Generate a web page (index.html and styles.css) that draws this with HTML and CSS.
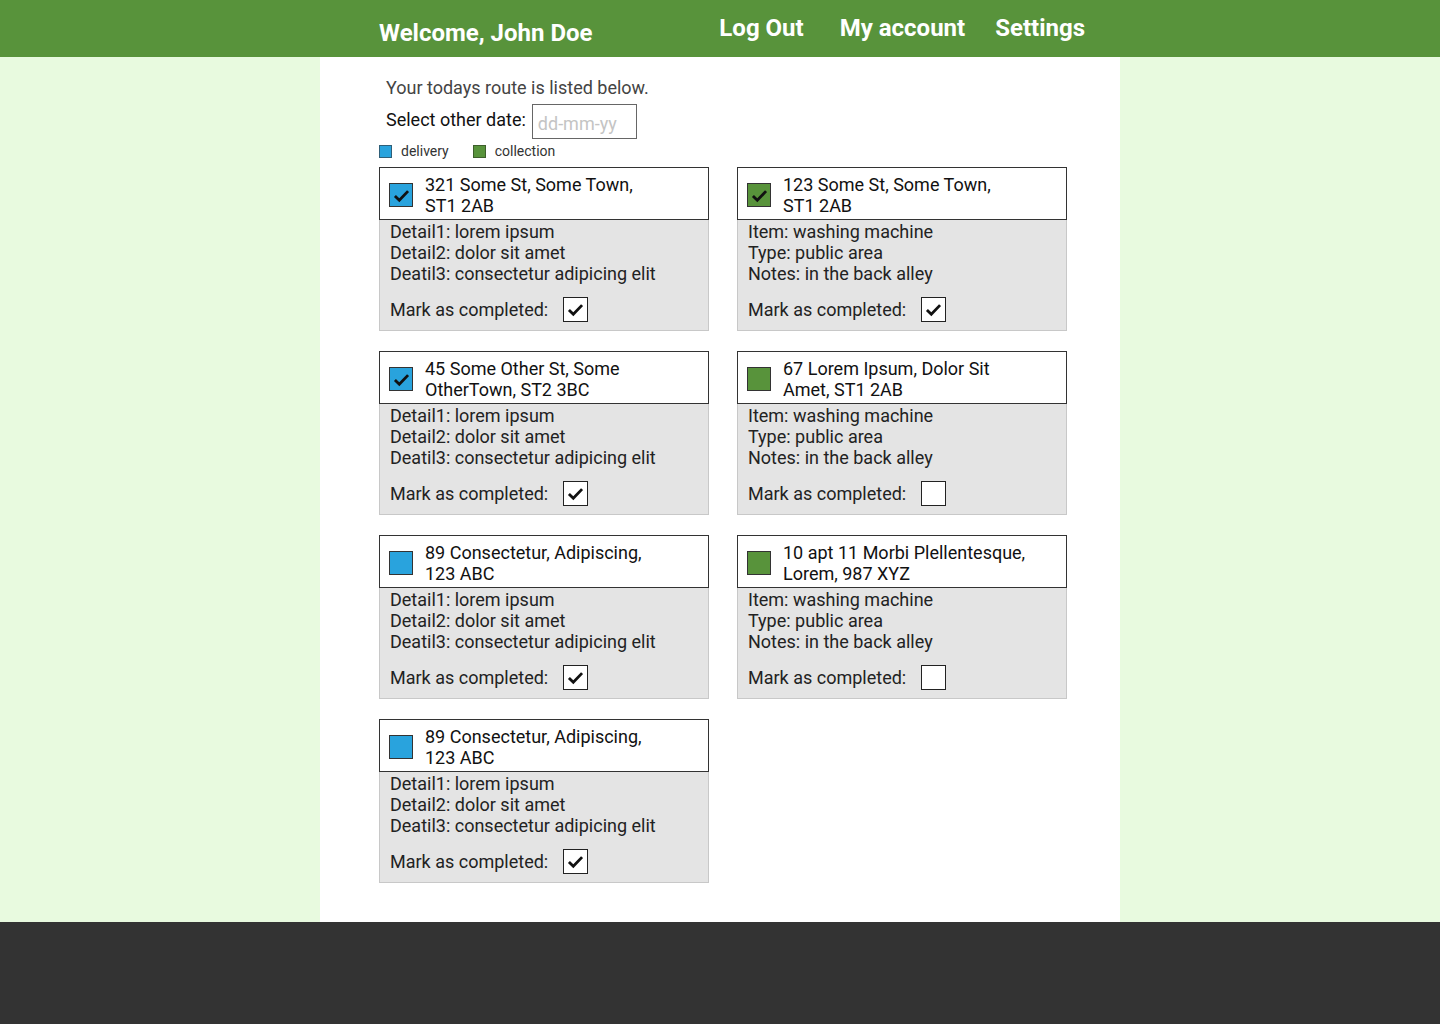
FILE: index.html
```html
<!DOCTYPE html>
<html lang="en">
<head>
<meta charset="utf-8">
<title>Route</title>
<link rel="stylesheet" href="styles.css">
</head>
<body>
<header class="topbar">
  <div class="topbar-inner">
    <div class="welcome">Welcome, John Doe</div>
    <nav class="nav">
      <a class="nav-link nav-logout" href="#">Log Out</a>
      <a class="nav-link nav-account" href="#">My account</a>
      <a class="nav-link" href="#">Settings</a>
    </nav>
  </div>
</header>
<div class="page">
  <main class="content">
    <p class="intro">Your todays route is listed below.</p>
    <div class="date-row">
      <label class="date-label" for="d">Select other date:</label>
      <input class="date-input" id="d" type="text" placeholder="dd-mm-yy">
    </div>
    <div class="legend">
      <span class="legend-item"><span class="swatch swatch-blue"></span>delivery</span>
      <span class="legend-item"><span class="swatch swatch-green"></span>collection</span>
    </div>
    <div class="cards">
      <div class="card">
        <div class="card-head">
          <span class="tag tag-blue"><svg viewBox="0 0 24 24"><path d="M4.5 12.5l5 5 10-10.5"/></svg></span>
          <span class="addr">321 Some St, Some Town,<br>ST1 2AB</span>
        </div>
        <div class="card-body">
          <div>Detail1: lorem ipsum</div>
          <div>Detail2: dolor sit amet</div>
          <div>Deatil3: consectetur adipicing elit</div>
          <div class="done-row">Mark as completed: <span class="box"><svg viewBox="0 0 24 24"><path d="M4.5 12.5l5 5 10-10.5"/></svg></span></div>
        </div>
      </div>
      <div class="card">
        <div class="card-head">
          <span class="tag tag-green"><svg viewBox="0 0 24 24"><path d="M4.5 12.5l5 5 10-10.5"/></svg></span>
          <span class="addr">123 Some St, Some Town,<br>ST1 2AB</span>
        </div>
        <div class="card-body">
          <div>Item: washing machine</div>
          <div>Type: public area</div>
          <div>Notes: in the back alley</div>
          <div class="done-row">Mark as completed: <span class="box"><svg viewBox="0 0 24 24"><path d="M4.5 12.5l5 5 10-10.5"/></svg></span></div>
        </div>
      </div>
      <div class="card">
        <div class="card-head">
          <span class="tag tag-blue"><svg viewBox="0 0 24 24"><path d="M4.5 12.5l5 5 10-10.5"/></svg></span>
          <span class="addr">45 Some Other St, Some<br>OtherTown, ST2 3BC</span>
        </div>
        <div class="card-body">
          <div>Detail1: lorem ipsum</div>
          <div>Detail2: dolor sit amet</div>
          <div>Deatil3: consectetur adipicing elit</div>
          <div class="done-row">Mark as completed: <span class="box"><svg viewBox="0 0 24 24"><path d="M4.5 12.5l5 5 10-10.5"/></svg></span></div>
        </div>
      </div>
      <div class="card">
        <div class="card-head">
          <span class="tag tag-green"></span>
          <span class="addr">67 Lorem Ipsum, Dolor Sit<br>Amet, ST1 2AB</span>
        </div>
        <div class="card-body">
          <div>Item: washing machine</div>
          <div>Type: public area</div>
          <div>Notes: in the back alley</div>
          <div class="done-row">Mark as completed: <span class="box"></span></div>
        </div>
      </div>
      <div class="card">
        <div class="card-head">
          <span class="tag tag-blue"></span>
          <span class="addr">89 Consectetur, Adipiscing,<br>123 ABC</span>
        </div>
        <div class="card-body">
          <div>Detail1: lorem ipsum</div>
          <div>Detail2: dolor sit amet</div>
          <div>Deatil3: consectetur adipicing elit</div>
          <div class="done-row">Mark as completed: <span class="box"><svg viewBox="0 0 24 24"><path d="M4.5 12.5l5 5 10-10.5"/></svg></span></div>
        </div>
      </div>
      <div class="card">
        <div class="card-head">
          <span class="tag tag-green"></span>
          <span class="addr">10 apt 11 Morbi Plellentesque,<br>Lorem, 987 XYZ</span>
        </div>
        <div class="card-body">
          <div>Item: washing machine</div>
          <div>Type: public area</div>
          <div>Notes: in the back alley</div>
          <div class="done-row">Mark as completed: <span class="box"></span></div>
        </div>
      </div>
      <div class="card">
        <div class="card-head">
          <span class="tag tag-blue"></span>
          <span class="addr">89 Consectetur, Adipiscing,<br>123 ABC</span>
        </div>
        <div class="card-body">
          <div>Detail1: lorem ipsum</div>
          <div>Detail2: dolor sit amet</div>
          <div>Deatil3: consectetur adipicing elit</div>
          <div class="done-row">Mark as completed: <span class="box"><svg viewBox="0 0 24 24"><path d="M4.5 12.5l5 5 10-10.5"/></svg></span></div>
        </div>
      </div>
    </div>
  </main>
</div>
<footer class="footer"></footer>
</body>
</html>
```
FILE: styles.css
```css
* { box-sizing: border-box; }
html, body { margin: 0; padding: 0; }
body {
  font-family: Roboto, "Liberation Sans", sans-serif;
  color: #222;
  background: #e8fadf;
  min-height: 1024px;
  display: flex;
  flex-direction: column;
}
.topbar {
  background: #58933b;
  height: 57px;
  color: #fff;
}
.topbar-inner {
  width: 800px;
  margin: 0 auto;
  height: 57px;
  display: flex;
  align-items: flex-start;
  padding: 0 35px 0 59px;
}
.welcome {
  font-weight: 700;
  font-size: 24px;
  line-height: 28px;
  padding-top: 19px;
}
.nav {
  margin-left: auto;
  display: flex;
  padding-top: 14px;
}
.nav-link {
  color: #fff;
  text-decoration: none;
  font-weight: 700;
  font-size: 24px;
  line-height: 28px;
}
.nav-logout { margin-right: 36px; }
.nav-account { margin-right: 30px; }

.page {
  flex: 1;
  display: flex;
  justify-content: center;
}
.content {
  width: 800px;
  background: #fff;
  padding: 20px 0 39px 59px;
}
.intro {
  margin: 0 0 6px 7px;
  font-size: 18px;
  line-height: 21px;
  color: #444;
}
.date-row {
  display: flex;
  align-items: center;
  margin-left: 7px;
  height: 35px;
}
.date-label {
  font-size: 18px;
  line-height: 21px;
  color: #111;
  margin-right: 6px;
  position: relative;
  top: -2px;
}
.date-input {
  width: 105px;
  height: 35px;
  border: 1px solid #666;
  font-family: Roboto, "Liberation Sans", sans-serif;
  font-size: 18px;
  padding: 3px 5px 0;
  color: #222;
  outline: none;
}
.date-input::placeholder { color: #c4c4c4; }
.legend {
  display: flex;
  align-items: center;
  margin-top: 3px;
  height: 18px;
  font-size: 14px;
  color: #333;
}
.legend-item {
  display: flex;
  align-items: center;
  margin-right: 24px;
}
.swatch {
  width: 13px;
  height: 13px;
  border: 1px solid #2f5f78;
  margin-right: 9px;
}
.swatch-blue { background: #29a3dd; }
.swatch-green { background: #58933b; border-color: #3d5f2b; }

.cards {
  margin-top: 7px;
  display: grid;
  grid-template-columns: 330px 330px;
  column-gap: 28px;
  row-gap: 20px;
}
.card {
  width: 330px;
  font-size: 18px;
  line-height: 21px;
}
.card-head {
  height: 53px;
  border: 1px solid #333;
  background: #fff;
  display: flex;
  align-items: center;
  padding: 2px 0 0 9px;
}
.tag {
  width: 24px;
  height: 24px;
  border: 1.5px solid #333;
  flex: none;
  margin-right: 12px;
  margin-top: 1px;
  display: flex;
  align-items: center;
  justify-content: center;
}
.tag-blue { background: #29a3dd; }
.tag-green { background: #58933b; }
.tag svg, .box svg {
  width: 21px;
  height: 21px;
  fill: none;
  stroke: #111;
  stroke-width: 3.2;
}
.addr { display: block; color: #111; }
.card-body {
  height: 111px;
  background: #e4e4e4;
  border: 1px solid #c8c8c8;
  border-top: none;
  padding: 1px 0 0 10px;
  color: #222;
}
.done-row {
  display: flex;
  align-items: center;
  height: 24px;
  margin-top: 13px;
}
.box {
  width: 25px;
  height: 25px;
  background: #fff;
  border: 1.5px solid #222;
  margin-left: 15px;
  display: flex;
  align-items: center;
  justify-content: center;
}
.footer {
  height: 102px;
  background: #333;
}
```
